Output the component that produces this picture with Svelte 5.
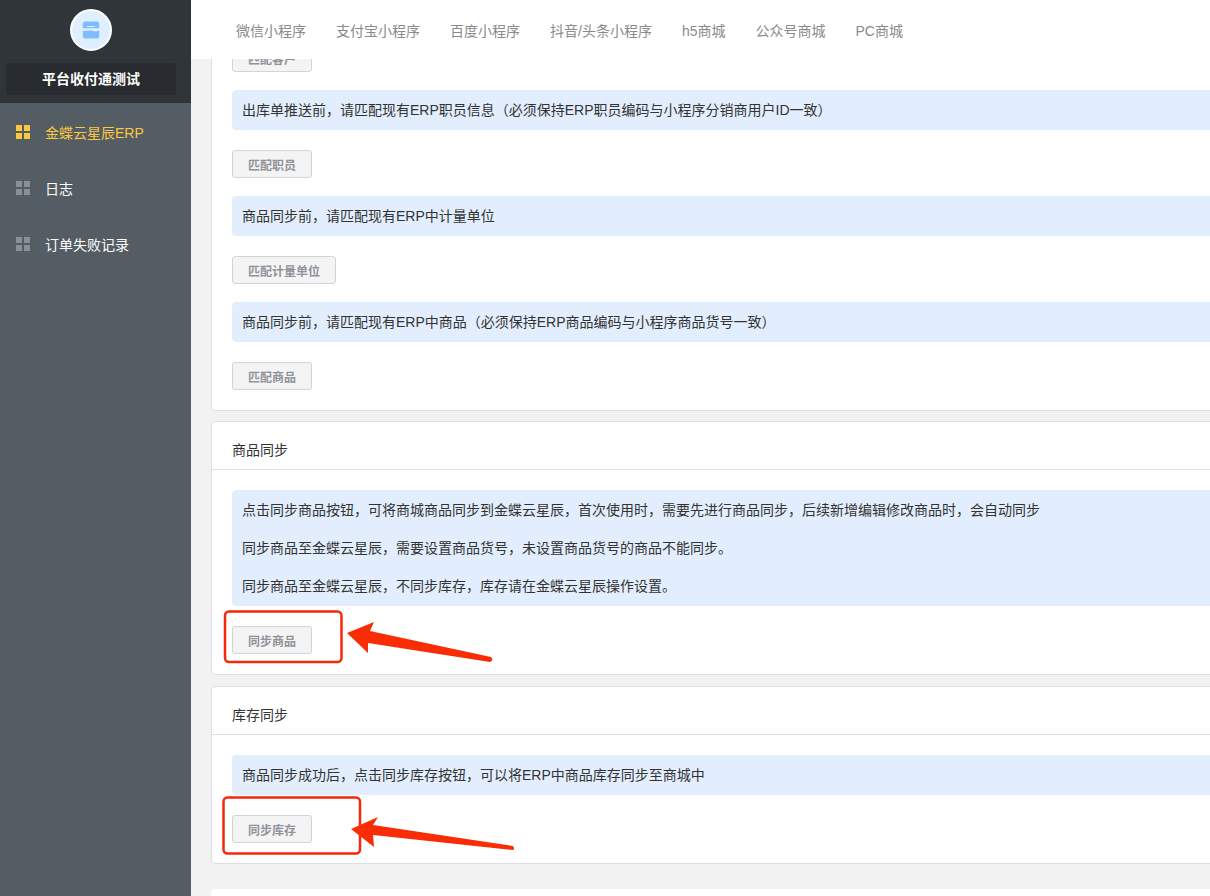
<script lang="ts">
	const tabs = ['微信小程序', '支付宝小程序', '百度小程序', '抖音/头条小程序', 'h5商城', '公众号商城', 'PC商城'];
	const menu = [
		{ label: '金蝶云星辰ERP', active: true },
		{ label: '日志', active: false },
		{ label: '订单失败记录', active: false }
	];
	const matches = [
		{ tips: '出库单推送前，请匹配现有ERP职员信息（必须保持ERP职员编码与小程序分销商用户ID一致）', button: '匹配职员' },
		{ tips: '商品同步前，请匹配现有ERP中计量单位', button: '匹配计量单位' },
		{ tips: '商品同步前，请匹配现有ERP中商品（必须保持ERP商品编码与小程序商品货号一致）', button: '匹配商品' }
	];
	const goodsTips = [
		'点击同步商品按钮，可将商城商品同步到金蝶云星辰，首次使用时，需要先进行商品同步，后续新增编辑修改商品时，会自动同步',
		'同步商品至金蝶云星辰，需要设置商品货号，未设置商品货号的商品不能同步。',
		'同步商品至金蝶云星辰，不同步库存，库存请在金蝶云星辰操作设置。'
	];
</script>

<div class="layout">
	<aside class="sidebar">
		<div class="brand">
			<div class="logo">
				<svg width="18" height="18" viewBox="0 0 18 18">
					<path d="M3 0.5h12a2.2 2.2 0 0 1 2.2 2.2V7.2H0.8V2.7A2.2 2.2 0 0 1 3 0.5z" fill="#7fbcff" />
					<path d="M0.8 9.6c2.7 1.5 5.4-0.8 8.2 0s5.5 1.300 8.200 0V15.300a2.200 2.200 0 0 1-2.200 2.200H3a2.200 2.200 0 0 1-2.200-2.200z" fill="#7fbcff" />
					<rect x="5" y="5" width="8" height="1" fill="#e3f0ff" />
				</svg>
			</div>
			<div class="shop-name">平台收付通测试</div>
		</div>
		<nav class="menu">
			{#each menu as item}
				<div class="menu-item" class:active={item.active}>
					<span class="grid-icon"><i></i><i></i><i></i><i></i></span>
					<span>{item.label}</span>
				</div>
			{/each}
		</nav>
	</aside>

	<main class="main">
		<header class="tabs">
			{#each tabs as tab}
				<span>{tab}</span>
			{/each}
		</header>

		<div class="scroll">
			<div class="content">
				<section class="card first">
					<div class="card-body">
						<button class="btn">匹配客户</button>
						{#each matches as row}
							<div class="tips"><p>{row.tips}</p></div>
							<button class="btn">{row.button}</button>
						{/each}
					</div>
				</section>

				<section class="card">
					<h3>商品同步</h3>
					<div class="card-body">
						<div class="tips">
							{#each goodsTips as line}
								<p>{line}</p>
							{/each}
						</div>
						<button class="btn">同步商品</button>
					</div>
				</section>

				<section class="card">
					<h3>库存同步</h3>
					<div class="card-body">
						<div class="tips"><p>商品同步成功后，点击同步库存按钮，可以将ERP中商品库存同步至商城中</p></div>
						<button class="btn">同步库存</button>
					</div>
				</section>

				<section class="card next"></section>
			</div>
		</div>

		<!-- red marks drawn on top of the screenshot -->
		<svg class="marks" width="1019" height="896" viewBox="191 0 1019 896">
			<rect x="225" y="611.500" width="116.500" height="50.500" rx="4" />
			<rect x="223.500" y="797.500" width="136.500" height="56" rx="4" />
			<path class="arrow" d="M347 633L374 622L370 631L491 657Q494 660 490 662L368 643L368 653z" />
			<path class="arrow" d="M351 829L378 817L373 825L513 846Q515 849 513 850L373 835L374 847z" />
		</svg>
	</main>
</div>

<style>
	:global(body) {
		margin: 0;
		font-family: 'Liberation Sans', 'Noto Sans CJK SC', sans-serif;
		font-size: 14px;
		color: #333;
	}

	.layout {
		display: flex;
		width: 1210px;
		height: 896px;
		overflow: hidden;
		background: #f2f2f2;
	}

	.sidebar {
		flex: 0 0 191px;
		display: flex;
		flex-direction: column;
		background: #545c64;
	}

	.brand {
		display: flex;
		flex-direction: column;
		align-items: center;
		height: 103px;
		padding: 9px 15px 0 6px;
		box-sizing: border-box;
		background: #30353a;
	}

	.logo {
		display: flex;
		align-items: center;
		justify-content: center;
		width: 38px;
		height: 38px;
		border: 2px solid #fff;
		border-radius: 50%;
		background: #e0efff;
	}

	.shop-name {
		width: 100%;
		height: 32px;
		margin-top: 12px;
		line-height: 32px;
		text-align: center;
		font-weight: 700;
		color: #fff;
		background: #282b2f;
		border-radius: 3px;
	}

	.menu {
		padding-top: 1px;
	}

	.menu-item {
		display: flex;
		align-items: center;
		gap: 15px;
		height: 56px;
		padding-left: 16px;
		color: #fff;
	}

	.menu-item.active {
		color: #fbc93f;
	}

	.grid-icon {
		display: grid;
		grid-template-columns: 6px 6px;
		gap: 2px;
	}

	.grid-icon i {
		height: 6px;
		background: #8b9096;
	}

	.active .grid-icon i {
		background: #fbc93f;
	}

	.main {
		position: relative;
		flex: 1;
		min-width: 0;
	}

	.tabs {
		position: relative;
		z-index: 1;
		display: flex;
		align-items: center;
		gap: 30px;
		height: 59px;
		padding-left: 45px;
		color: #8a8a8a;
		background: #fff;
	}

	.scroll {
		height: 837px;
		overflow: hidden;
	}

	.content {
		width: 1100px;
		margin: -15px 0 0 20px;
	}

	.card {
		margin-bottom: 11px;
		background: #fff;
		border: 1px solid #dcdfe6;
		border-radius: 4px;
	}

	.card.first {
		border-top: 0;
		margin-bottom: 10px;
	}

	.card.next {
		height: 100px;
		margin-top: 25px;
		border: 0;
	}

	.card h3 {
		height: 47px;
		margin: 0;
		padding-left: 20px;
		line-height: 56px;
		font-size: 14px;
		font-weight: 400;
		border-bottom: 1px solid #dcdfe6;
	}

	.card-body {
		display: flex;
		flex-direction: column;
		align-items: flex-start;
		padding: 20px;
	}

	.first .card-body {
		padding-top: 0;
	}

	.tips {
		align-self: stretch;
		padding: 10px;
		line-height: 20px;
		background: #e2eefd;
		border-radius: 4px;
	}

	.tips p {
		margin: 0 0 18px;
	}

	.tips p:last-child {
		margin-bottom: 0;
	}

	.btn {
		height: 28px;
		min-width: 80px;
		margin: 20px 0 18px;
		padding: 0 15px;
		font: inherit;
		font-size: 12px;
		font-weight: 700;
		color: #909399;
		background: #f4f4f5;
		border: 1px solid #d3d4d6;
		border-radius: 3px;
	}

	.first .btn:first-child {
		margin-top: 0;
	}

	.btn:last-child {
		margin-bottom: 0;
	}

	.marks {
		position: absolute;
		left: 0;
		top: 0;
		pointer-events: none;
	}

	.marks rect {
		fill: none;
		stroke: #f5280a;
		stroke-width: 2.500;
	}

	.marks .arrow {
		fill: #f92d05;
	}
</style>
